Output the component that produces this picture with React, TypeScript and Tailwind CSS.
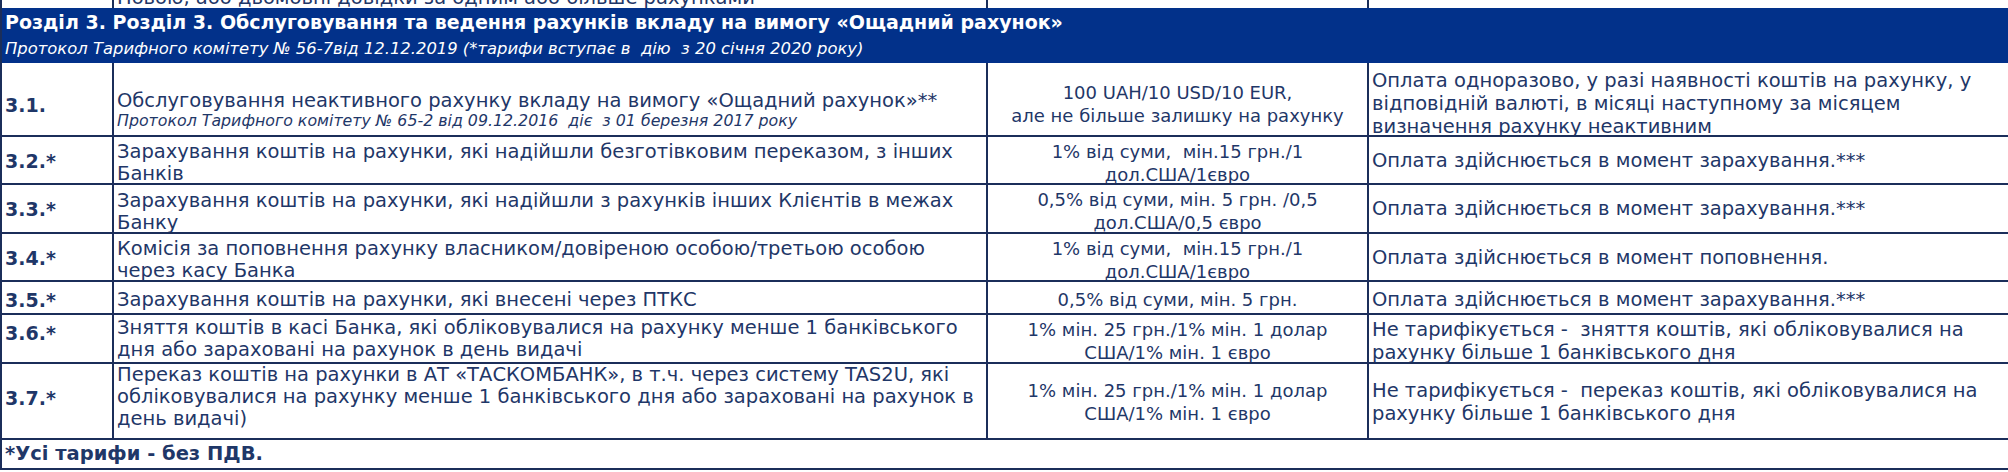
import React from "react"

const font = { fontFamily: '"DejaVu Sans", Verdana, sans-serif' }

type Row = {
  id: string
  h: string
  pad: { label: string; desc: string; fee: string; note: string }
  desc: string[]
  sub?: string
  fee: string[]
  note: string[]
}

const ROWS: Row[] = [
  {
    id: "3.1.",
    h: "h-[74px]",
    pad: { label: "pt-[31px]", desc: "pt-[27px]", fee: "pt-[18px]", note: "pt-[6px]" },
    desc: ["Обслуговування неактивного рахунку вкладу на вимогу «Ощадний рахунок»**"],
    sub: "Протокол Тарифного комітету № 65-2 від 09.12.2016  діє  з 01 березня 2017 року",
    fee: ["100 UAH/10 USD/10 EUR,", "але не більше залишку на рахунку"],
    note: [
      "Оплата одноразово, у разі наявності коштів на рахунку, у",
      "відповідній валюті, в місяці наступному за місяцем",
      "визначення рахунку неактивним",
    ],
  },
  {
    id: "3.2.*",
    h: "h-[48px]",
    pad: { label: "pt-[13px]", desc: "pt-[4px]", fee: "pt-[3px]", note: "pt-[12px]" },
    desc: ["Зарахування коштів на рахунки, які надійшли безготівковим переказом, з інших", "Банків"],
    fee: ["1% від суми,  мін.15 грн./1", "дол.США/1євро"],
    note: ["Оплата здійснюється в момент зарахування.***"],
  },
  {
    id: "3.3.*",
    h: "h-[49px]",
    pad: { label: "pt-[13px]", desc: "pt-[5px]", fee: "pt-[3px]", note: "pt-[12px]" },
    desc: ["Зарахування коштів на рахунки, які надійшли з рахунків інших Клієнтів в межах", "Банку"],
    fee: ["0,5% від суми, мін. 5 грн. /0,5", "дол.США/0,5 євро"],
    note: ["Оплата здійснюється в момент зарахування.***"],
  },
  {
    id: "3.4.*",
    h: "h-[48px]",
    pad: { label: "pt-[13px]", desc: "pt-[4px]", fee: "pt-[3px]", note: "pt-[12px]" },
    desc: ["Комісія за поповнення рахунку власником/довіреною особою/третьою особою", "через касу Банка"],
    fee: ["1% від суми,  мін.15 грн./1", "дол.США/1євро"],
    note: ["Оплата здійснюється в момент поповнення."],
  },
  {
    id: "3.5.*",
    h: "h-[33px]",
    pad: { label: "pt-[7px]", desc: "pt-[7px]", fee: "pt-[6px]", note: "pt-[6px]" },
    desc: ["Зарахування коштів на рахунки, які внесені через ПТКС"],
    fee: ["0,5% від суми, мін. 5 грн."],
    note: ["Оплата здійснюється в момент зарахування.***"],
  },
  {
    id: "3.6.*",
    h: "h-[49px]",
    pad: { label: "pt-[7px]", desc: "pt-[2px]", fee: "pt-[3px]", note: "pt-[3px]" },
    desc: ["Зняття коштів в касі Банка, які обліковувалися на рахунку менше 1 банківського", "дня або зараховані на рахунок в день видачі"],
    fee: ["1% мін. 25 грн./1% мін. 1 долар", "США/1% мін. 1 євро"],
    note: ["Не тарифікується -  зняття коштів, які обліковувалися на", "рахунку більше 1 банківського дня"],
  },
  {
    id: "3.7.*",
    h: "h-[76px]",
    pad: { label: "pt-[23px]", desc: "pt-0", fee: "pt-[15px]", note: "pt-[15px]" },
    desc: [
      "Переказ коштів на рахунки в АТ «ТАСКОМБАНК», в т.ч. через систему TAS2U, які",
      "обліковувалися на рахунку менше 1 банківського дня або зараховані на рахунок в",
      "день видачі)",
    ],
    fee: ["1% мін. 25 грн./1% мін. 1 долар", "США/1% мін. 1 євро"],
    note: ["Не тарифікується -  переказ коштів, які обліковувалися на", "рахунку більше 1 банківського дня"],
  },
]

function Lines({ lines }: { lines: string[] }) {
  return (
    <>
      {lines.map((l, i) => (
        <div key={i} className="whitespace-pre">
          {l}
        </div>
      ))}
    </>
  )
}

export default function App() {
  return (
    <div className="w-[2008px] h-[472px] overflow-hidden bg-white text-[#1f3768]" style={font}>
      <div className="w-[2030px] border-l-2 border-[#1b2e5a]">
        {/* clipped row from the previous section */}
        <div className="flex h-[8px] overflow-hidden">
          <div className="w-[112px] shrink-0 border-r-2 border-[#1b2e5a]" />
          <div className="w-[874px] shrink-0 border-r-2 border-[#1b2e5a] pl-[3px]">
            <div className="-mt-[13px] whitespace-pre text-[19.5px] leading-[22px]">
              Новою, або двомовні довідки за одним або більше рахунками
            </div>
          </div>
          <div className="w-[381px] shrink-0 border-r-2 border-[#1b2e5a]" />
          <div className="flex-1" />
        </div>

        {/* section header */}
        <div className="bg-[#02318a] text-white h-[55px] flex flex-col">
          <div className="h-[28px] flex items-center pl-[3px] text-[19px] font-bold whitespace-pre">
            Розділ 3. Розділ 3. Обслуговування та ведення рахунків вкладу на вимогу «Ощадний рахунок»
          </div>
          <div className="h-[27px] flex items-center pl-[3px] text-[16.4px] italic whitespace-pre">
            Протокол Тарифного комітету № 56-7від 12.12.2019 (*тарифи вступає в  дію  з 20 січня 2020 року)
          </div>
        </div>

        {ROWS.map((r) => (
          <div key={r.id} className={"flex border-b-2 border-[#1b2e5a] overflow-hidden " + r.h}>
            <div className={"w-[112px] shrink-0 border-r-2 border-[#1b2e5a] pl-[3px] text-[19px] font-bold leading-[22px] " + r.pad.label}>
              {r.id}
            </div>
            <div className={"w-[874px] shrink-0 border-r-2 border-[#1b2e5a] pl-[3px] text-[19.5px] leading-[22px] " + r.pad.desc}>
              <Lines lines={r.desc} />
              {r.sub && (
                <div className="whitespace-pre text-[15.8px] italic leading-[18px]">{r.sub}</div>
              )}
            </div>
            <div className={"w-[381px] shrink-0 border-r-2 border-[#1b2e5a] flex flex-col items-center text-[18px] leading-[23px] " + r.pad.fee}>
              <Lines lines={r.fee} />
            </div>
            <div className={"flex-1 pl-[3px] text-[19.5px] leading-[23px] " + r.pad.note}>
              <Lines lines={r.note} />
            </div>
          </div>
        ))}

        {/* footer */}
        <div className="h-[30px] flex items-center pl-[3px] border-b-2 border-[#1b2e5a] text-[19.5px] font-bold whitespace-pre">
          *Усі тарифи - без ПДВ.
        </div>
      </div>
    </div>
  )
}
